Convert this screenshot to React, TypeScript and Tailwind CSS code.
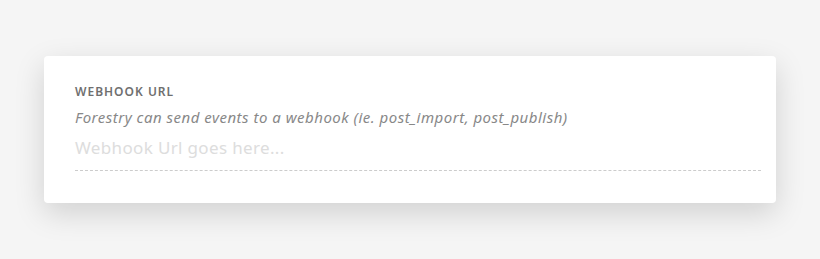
export default function App() {
  return (
    <div className="w-[820px] h-[259px] bg-[#f5f5f5] pt-[56px] pl-[44px]" style={{ fontFamily: '"Noto Sans", sans-serif' }}>
      <div className="w-[732px] h-[147px] bg-white rounded-[4px] shadow-[0_10px_30px_rgba(0,0,0,0.15)] pl-[31px] pr-[15px] pt-[28px]">
        <div className="text-[12px] leading-[16px] font-semibold tracking-[1px] text-[#6f6f6f]">WEBHOOK URL</div>
        <div className="mt-[7px] text-[15px] leading-[20px] italic tracking-[0.5px] text-[#888888]">Forestry can send events to a webhook (ie. post_import, post_publish)</div>
        <div className="mt-[9px] text-[17px] leading-[24px] tracking-[0.35px] text-[#dddddd]">Webhook Url goes here...</div>
        <div className="mt-[10px] border-t border-dashed border-[#cccccc]"></div>
      </div>
    </div>
  );
}
